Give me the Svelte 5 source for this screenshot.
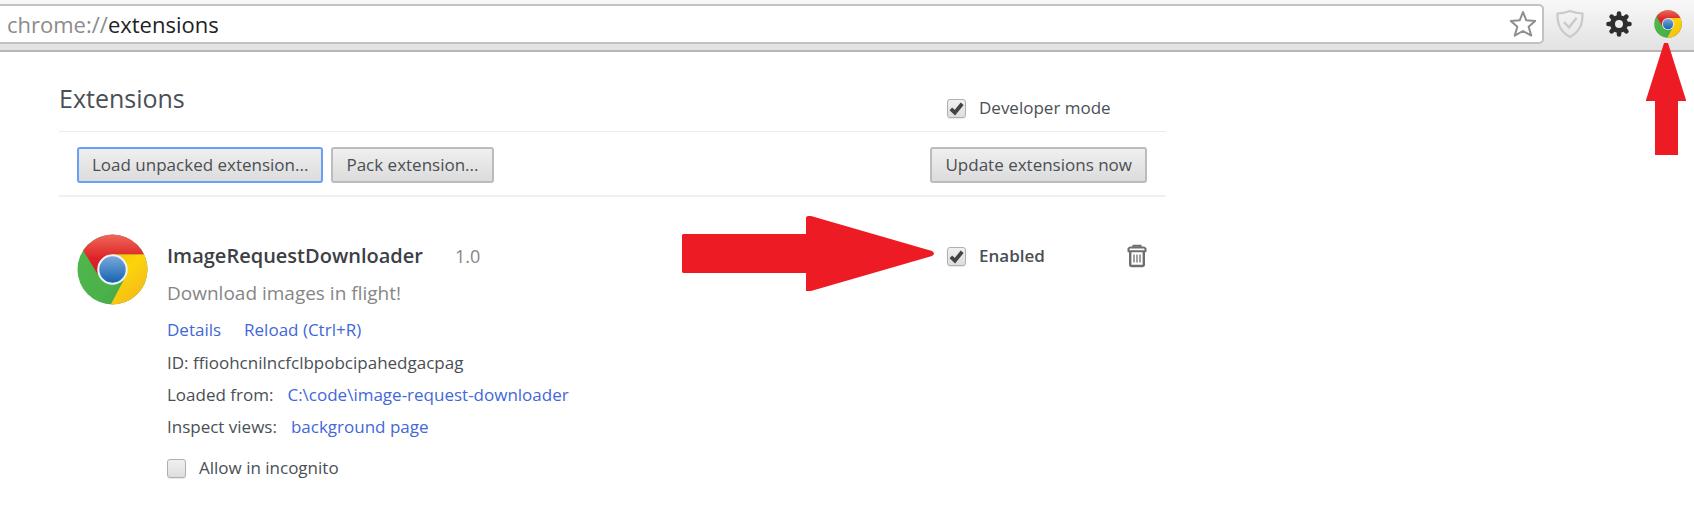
<script>
  let developerMode = $state(true);
  let enabled = $state(true);
  let incognito = $state(false);
</script>

{#snippet chromeLogo(id)}
  <svg class="logo" viewBox="0 0 70 70" aria-hidden="true">
    <defs>
      <linearGradient id="{id}-red" x1="0" y1="0" x2="0" y2="1">
        <stop offset="0" stop-color="#f0685a" />
        <stop offset="0.6" stop-color="#dd2327" />
        <stop offset="1" stop-color="#d31f26" />
      </linearGradient>
      <linearGradient id="{id}-blue" x1="0" y1="0" x2="0" y2="1">
        <stop offset="0" stop-color="#78a9da" />
        <stop offset="1" stop-color="#1663b0" />
      </linearGradient>
      <linearGradient id="{id}-green" x1="0" y1="0" x2="1" y2="1">
        <stop offset="0" stop-color="#4fba4b" />
        <stop offset="0.6" stop-color="#4bb14a" />
        <stop offset="1" stop-color="#3f9d45" />
      </linearGradient>
      <linearGradient id="{id}-yellow" x1="0" y1="0" x2="0.7" y2="1">
        <stop offset="0" stop-color="#f2c30e" />
        <stop offset="0.4" stop-color="#fdd40a" />
        <stop offset="1" stop-color="#f3b81b" />
      </linearGradient>
      <clipPath id="{id}-disc"><circle cx="35" cy="35" r="34.5" /></clipPath>
    </defs>
    <g clip-path="url(#{id}-disc)">
      <rect width="70" height="70" fill="url(#{id}-green)" />
      <path d="M35 20H70V70H33L48 42Z" fill="url(#{id}-yellow)" />
      <path d="M6 16L20.500 40L35 35L35 20H68V0H0Z" fill="url(#{id}-red)" />
    </g>
    <circle cx="35" cy="35" r="15" fill="#f1f3f6" />
    <circle cx="35" cy="35" r="13" fill="url(#{id}-blue)" />
  </svg>
{/snippet}

<header class="toolbar">
  <label class="address">
    <span class="url" aria-hidden="true"><span class="scheme">chrome://</span>extensions</span>
    <input type="text" aria-label="Address" />
    <button type="button" class="icon" aria-label="Bookmark this page">
      <svg width="28" height="28" viewBox="0 0 28 28">
        <path d="M14 2L17.300 10.300L26.200 11L19.600 16.800L22.300 25.600L14 21L5.700 25.600L8.400 16.800L1.800 11L10.700 10.300Z" fill="#fff" stroke="#8e8e8e" stroke-width="2" stroke-linejoin="round" />
      </svg>
    </button>
  </label>
  <nav class="actions" aria-label="Browser actions">
    <button type="button" class="icon" aria-label="Shield">
      <svg width="28" height="28" viewBox="0 0 28 28" fill="none" stroke="#c9c9c9" stroke-width="2.200" stroke-linejoin="round">
        <path d="M14 1C18 2.500 22 3.300 26.500 3.500C26.700 14 24 21.500 14 27C4 21.500 1.300 14 1.500 3.500C6 3.300 10 2.500 14 1Z" />
        <path d="M8 12L13 17.500L20.500 8" stroke-width="2.400" stroke-linejoin="miter" />
      </svg>
    </button>
    <button type="button" class="icon" aria-label="Settings">
      <svg width="28" height="28" viewBox="-14 -14 28 28">
        <g stroke="#2e2e2e" stroke-width="4.600" stroke-linecap="round">
          <path d="M0 -10.500V-7M0 10.500V7M-10.500 0H-7M10.500 0H7M-7.400 -7.400L-5 -5M7.400 -7.400L5 -5M-7.400 7.400L-5 5M7.400 7.400L5 5" />
        </g>
        <circle r="6.500" fill="none" stroke="#2e2e2e" stroke-width="5" />
      </svg>
    </button>
    <button type="button" class="icon" aria-label="ImageRequestDownloader">
      {@render chromeLogo('action')}
    </button>
  </nav>
  <svg class="arrow arrow-up" width="42" height="113" viewBox="0 0 42 113" aria-hidden="true">
    <path d="M19 0H23L41 57V58H33V112H10V58H1V57Z" fill="#ed1c24" />
  </svg>
</header>

<main>
  <div class="heading">
    <h1>Extensions</h1>
    <label class="check dev"><input type="checkbox" bind:checked={developerMode} />Developer mode</label>
  </div>

  <div class="controls">
    <button type="button" class="push focused">Load unpacked extension...</button>
    <button type="button" class="push">Pack extension...</button>
    <button type="button" class="push last">Update extensions now</button>
  </div>

  <article>
    <div class="picture">{@render chromeLogo('card')}</div>
    <div class="details">
      <div class="title"><h2>ImageRequestDownloader</h2><span class="version">1.0</span></div>
      <p class="description">Download images in flight!</p>
      <p class="links"><a href="#details">Details</a><a href="#reload">Reload (Ctrl+R)</a></p>
      <p class="meta">ID: ffioohcnilncfclbpobcipahedgacpag</p>
      <p class="meta">Loaded from:<a href="#folder">C:\code\image-request-downloader</a></p>
      <p class="meta">Inspect views:<a href="#background">background page</a></p>
      <label class="check incognito"><input type="checkbox" bind:checked={incognito} />Allow in incognito</label>
    </div>
    <div class="state">
      <svg class="arrow arrow-right" width="253" height="78" viewBox="0 0 253 78" aria-hidden="true">
        <path d="M1 19H124V2L126 1H129L250 36L252 38V39L250 41L129 76H124V58H1L0 57V20Z" fill="#ed1c24" />
      </svg>
      <label class="check enabled"><input type="checkbox" bind:checked={enabled} />Enabled</label>
      <button type="button" class="icon" aria-label="Remove extension">
        <svg width="20" height="24" viewBox="0 0 20 24" fill="none" stroke="#6e6e6e">
          <path d="M6.500 3V1.700H13.500V3" stroke-width="2" />
          <path d="M1.500 7.200V4.500L3 3.500H17L18.500 4.500V7.200Z" stroke-width="2" stroke-linejoin="round" />
          <path d="M3.200 8V20.500Q3.200 22 4.700 22H15.300Q16.800 22 16.800 20.500V8" stroke-width="2.400" />
          <path d="M7 10.500V18.500M10 10.500V18.500M13 10.500V18.500" stroke-width="1.300" />
        </svg>
      </button>
    </div>
  </article>
</main>

<style>
  :global(body) {
    margin: 0;
    background: #fff;
    color: #4a4f55;
    font: 17px/24px "Open Sans", "Noto Sans", sans-serif;
  }

  h1, h2, p { margin: 0; }

  button { font: inherit; color: inherit; }

  .icon {
    display: flex;
    padding: 0;
    border: 0;
    background: none;
  }

  .toolbar {
    position: relative;
    display: flex;
    align-items: center;
    gap: 12px;
    height: 52px;
    box-sizing: border-box;
    padding: 4px 12px 6px 0;
    border-bottom: 2px solid #b6b6b6;
    background: linear-gradient(#f8f8f8, #e2e2e2);
  }

  .address {
    flex: 1;
    display: flex;
    align-items: center;
    box-sizing: border-box;
    height: 40px;
    padding: 0 5px 0 7px;
    border: 2px solid #c2c2c2;
    border-left: 0;
    border-radius: 0 5px 5px 0;
    background: #fff;
  }

  .url {
    color: #222;
    font-size: 22px;
  }

  .scheme { color: #8c8c8c; }

  .address input {
    flex: 1;
    min-width: 0;
    border: 0;
    outline: 0;
    background: none;
    font: inherit;
  }

  .actions {
    display: flex;
    gap: 21px;
  }

  .actions .logo {
    width: 28px;
    height: 28px;
  }

  .arrow { position: absolute; }

  .arrow-up {
    top: 43px;
    right: 7px;
  }

  main {
    max-width: 1107px;
    margin: 0 59px;
  }

  .heading {
    display: flex;
    justify-content: space-between;
    height: 80px;
    box-sizing: border-box;
    padding-top: 30px;
    border-bottom: 1px solid #ebebeb;
  }

  h1 {
    font-size: 25px;
    font-weight: 400;
    line-height: 32px;
  }

  .check {
    display: flex;
    align-items: center;
    gap: 13px;
  }

  .check input {
    appearance: none;
    box-sizing: border-box;
    flex: none;
    width: 19px;
    height: 19px;
    margin: 0;
    border: 1px solid #b0b0b0;
    border-radius: 3px;
    background: linear-gradient(#f0f0f0, #dedede);
    box-shadow: 0 1px 1px #00000018;
  }

  .check input:checked {
    background: url("data:image/svg+xml,%3Csvg xmlns='http://www.w3.org/2000/svg' viewBox='0 0 18 18'%3E%3Cpath d='M3 9.500L7.300 13.500L15 4' fill='none' stroke='%23444' stroke-width='4'/%3E%3C/svg%3E"), linear-gradient(#f0f0f0, #dedede);
  }

  .dev, .state { width: 219px; }

  .dev { height: 52px; }

  .controls {
    display: flex;
    gap: 8px;
    padding: 15px 19px 12px 18px;
    border-bottom: 2px solid #f0f0f0;
  }

  .push {
    height: 36px;
    padding: 0 13px;
    border: 2px solid #bcbcbc;
    border-radius: 3px;
    background: linear-gradient(#efefef, #dcdcdc);
    white-space: nowrap;
  }

  .focused { border-color: #6a9ff8; }

  .last { margin-left: auto; }

  article {
    display: flex;
    padding: 37px 0 0 18px;
  }

  .picture {
    width: 90px;
    flex: none;
  }

  .logo { display: block; }

  .picture .logo {
    width: 71px;
    height: 71px;
  }

  .details {
    flex: 1;
    padding-top: 8px;
  }

  .title {
    display: flex;
    gap: 32px;
    align-items: baseline;
    margin-bottom: 2px;
    line-height: 28px;
  }

  h2 {
    color: #3c4045;
    font-size: 20px;
    font-weight: 600;
  }

  .version { font-size: 18px; }

  .version, .description { color: #868686; }

  .description {
    font-size: 19px;
    line-height: 42px;
  }

  .links {
    display: flex;
    gap: 23px;
    margin-bottom: 1px;
  }

  .links, .meta { line-height: 32px; }

  .meta a { margin-left: 14px; }

  a {
    color: #3f68d8;
    text-decoration: none;
  }

  .incognito { margin-top: 13px; }

  .state {
    position: relative;
    display: flex;
    align-items: center;
    justify-content: space-between;
    box-sizing: border-box;
    height: 28px;
    margin-top: 8px;
    padding-right: 19px;
  }

  .enabled { font-weight: 600; }

  .arrow-right {
    top: -27px;
    right: 231px;
  }
</style>
